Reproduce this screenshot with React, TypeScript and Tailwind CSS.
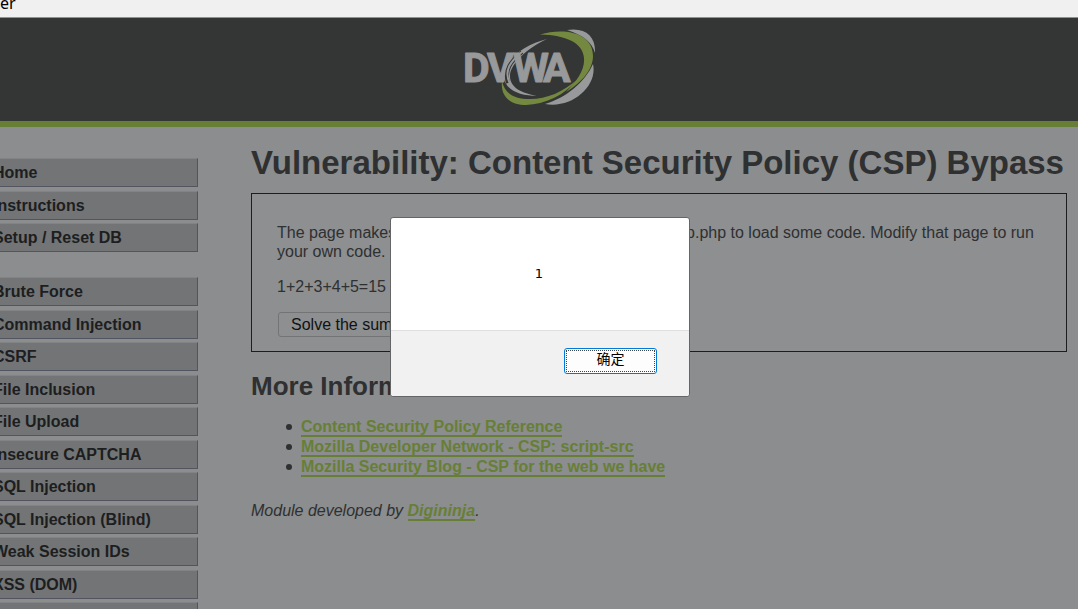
import React from "react";

const primaryLinks = ["Home", "Instructions", "Setup / Reset DB"];
const moduleLinks = [
  "Brute Force",
  "Command Injection",
  "CSRF",
  "File Inclusion",
  "File Upload",
  "Insecure CAPTCHA",
  "SQL Injection",
  "SQL Injection (Blind)",
  "Weak Session IDs",
  "XSS (DOM)",
  "XSS (Reflected)",
];
const references = [
  "Content Security Policy Reference",
  "Mozilla Developer Network - CSP: script-src",
  "Mozilla Security Blog - CSP for the web we have",
];

function Logo() {
  return (
    <svg width="134" height="78" viewBox="462 29 134 78" role="img" aria-label="DVWA">
      <path d="M547 39C526 44 504 59 504 76C504 90 520 96 537 96C522 93 510 88 510 76C510 64 527 48 547 39Z" fill="#98999a" />
      <path d="M502 81C500 98 512 105 526 105C545 104 564 96 578 79C563 92 547 99 530 99C514 99 505 94 502 81Z" fill="#74893f" />
      <path d="M540 34.500C565 27 593 33 593 56C593 70 581 83 566 92C577 81 585 70 584 58C583 43 566 35 540 34.500Z" fill="#74893f" />
      <path d="M567 30C586 27 596 37 595 53C592 42 583 35 567 30Z" fill="#98999a" />
      <path d="M593 64C598 86 572 109 545 104C566 98 585 82 593 64Z" fill="#98999a" />
      <g fontSize="41" fontWeight="700" strokeLinejoin="round" className="font-['Roboto',sans-serif]">
        <text x="463 487" y="82" fill="#98999a" stroke="#98999a" strokeWidth="1">DV</text>
        <path d="M522 52C511 61 504 70 508 83" fill="none" stroke="#343535" strokeWidth="4" />
        <path d="M523 51C511 61 503 70 510 84" fill="none" stroke="#98999a" strokeWidth="2" />
        <text x="513 543" y="82" fill="#98999a" stroke="#98999a" strokeWidth="1">WA</text>
      </g>
    </svg>
  );
}

function Menu({ items }: { items: string[] }) {
  return (
    <ul>
      {items.map((item) => (
        <li key={item} className="mb-[3px] odd:mb-1">
          <a
            href="#"
            className="flex h-[29px] items-center border border-t-[#818384] border-r-[#52555f] border-b-[#52555f] border-l-[#818384] bg-[#727475] pl-2 font-bold text-[#1d1e1f]"
          >
            {item}
          </a>
        </li>
      ))}
    </ul>
  );
}

export default function App() {
  return (
    <div className="relative h-screen overflow-hidden bg-[#8b8d8e] font-['Liberation_Sans',Arial,sans-serif] text-base leading-5 text-[#2f3031]">
      <div className="flex h-[18px] items-end overflow-hidden border-b border-[#8f9290] bg-[#f0f0f0] pb-1 font-['Noto_Sans',sans-serif] text-black">
        er
      </div>
      <header className="flex h-[109px] justify-center border-b-[6px] border-[#677f35] bg-[#343535] pt-[11px] pr-5">
        <Logo />
      </header>
      <div className="flex">
        <nav className="-ml-4 w-[214px] shrink-0 pt-[31px]">
          <Menu items={primaryLinks} />
          <div className="h-[21px]" />
          <Menu items={moduleLinks} />
        </nav>
        <main className="mr-[11px] ml-[53px] min-w-0 flex-1 pt-4">
          <h1 className="text-[33px] leading-10 font-bold whitespace-nowrap">Vulnerability: Content Security Policy (CSP) Bypass</h1>
          <section className="mt-[10px] h-[159px] border border-[#1c1d1e] bg-[#8d8f90] px-[25px] pt-[29px]">
            <p className="leading-[19px]">
              The page makes a call to ../vulnerabilities/csp/source/jsonp.php to load some code. Modify that page to run your own code.
            </p>
            <p className="mt-4 leading-[19px]">1+2+3+4+5=15</p>
            <button className="mt-4 ml-px h-[25px] rounded-[3px] border border-[#727475] px-3 text-[#111213]">Solve the sum</button>
          </section>
          <h2 className="mt-[19px] text-[26px] leading-[30px] font-bold">More Information</h2>
          <ul className="mt-4 pl-[35px]">
            {references.map((title) => (
              <li key={title} className="flex items-center gap-[9px] before:size-[6px] before:rounded-full before:bg-[#2f3031]">
                <span>
                  <a href="#" className="border-b-2 border-[#677f35] font-bold text-[#677f35]">{title}</a>
                </span>
              </li>
            ))}
          </ul>
          <p className="mt-6 italic">
            Module developed by <a href="#" className="border-b-2 border-[#677f35] font-bold text-[#677f35]">Digininja</a>.
          </p>
        </main>
      </div>
      <div
        role="alertdialog"
        aria-label="1"
        className="absolute top-[217px] left-1/2 ml-[-149px] w-[300px] rounded-[3px] border border-[#636566] bg-white font-['Noto_Sans','Noto_Sans_CJK_SC',sans-serif] text-sm text-black"
      >
        <div className="flex h-28 items-center justify-center pr-0.5 font-['DejaVu_Sans',sans-serif] text-[13px]">1</div>
        <div className="flex h-[66px] items-start justify-end rounded-b-[3px] border-t border-[#dfdfdf] bg-[#f1f1f1] pt-[17px] pr-8">
          <button className="h-[26px] w-[93px] rounded-[3px] border border-[#0078d7] bg-[#fdfdfd] p-px">
            <span className="flex h-full items-center justify-center border border-dotted border-[#444444] pb-1">确定</span>
          </button>
        </div>
      </div>
    </div>
  );
}
